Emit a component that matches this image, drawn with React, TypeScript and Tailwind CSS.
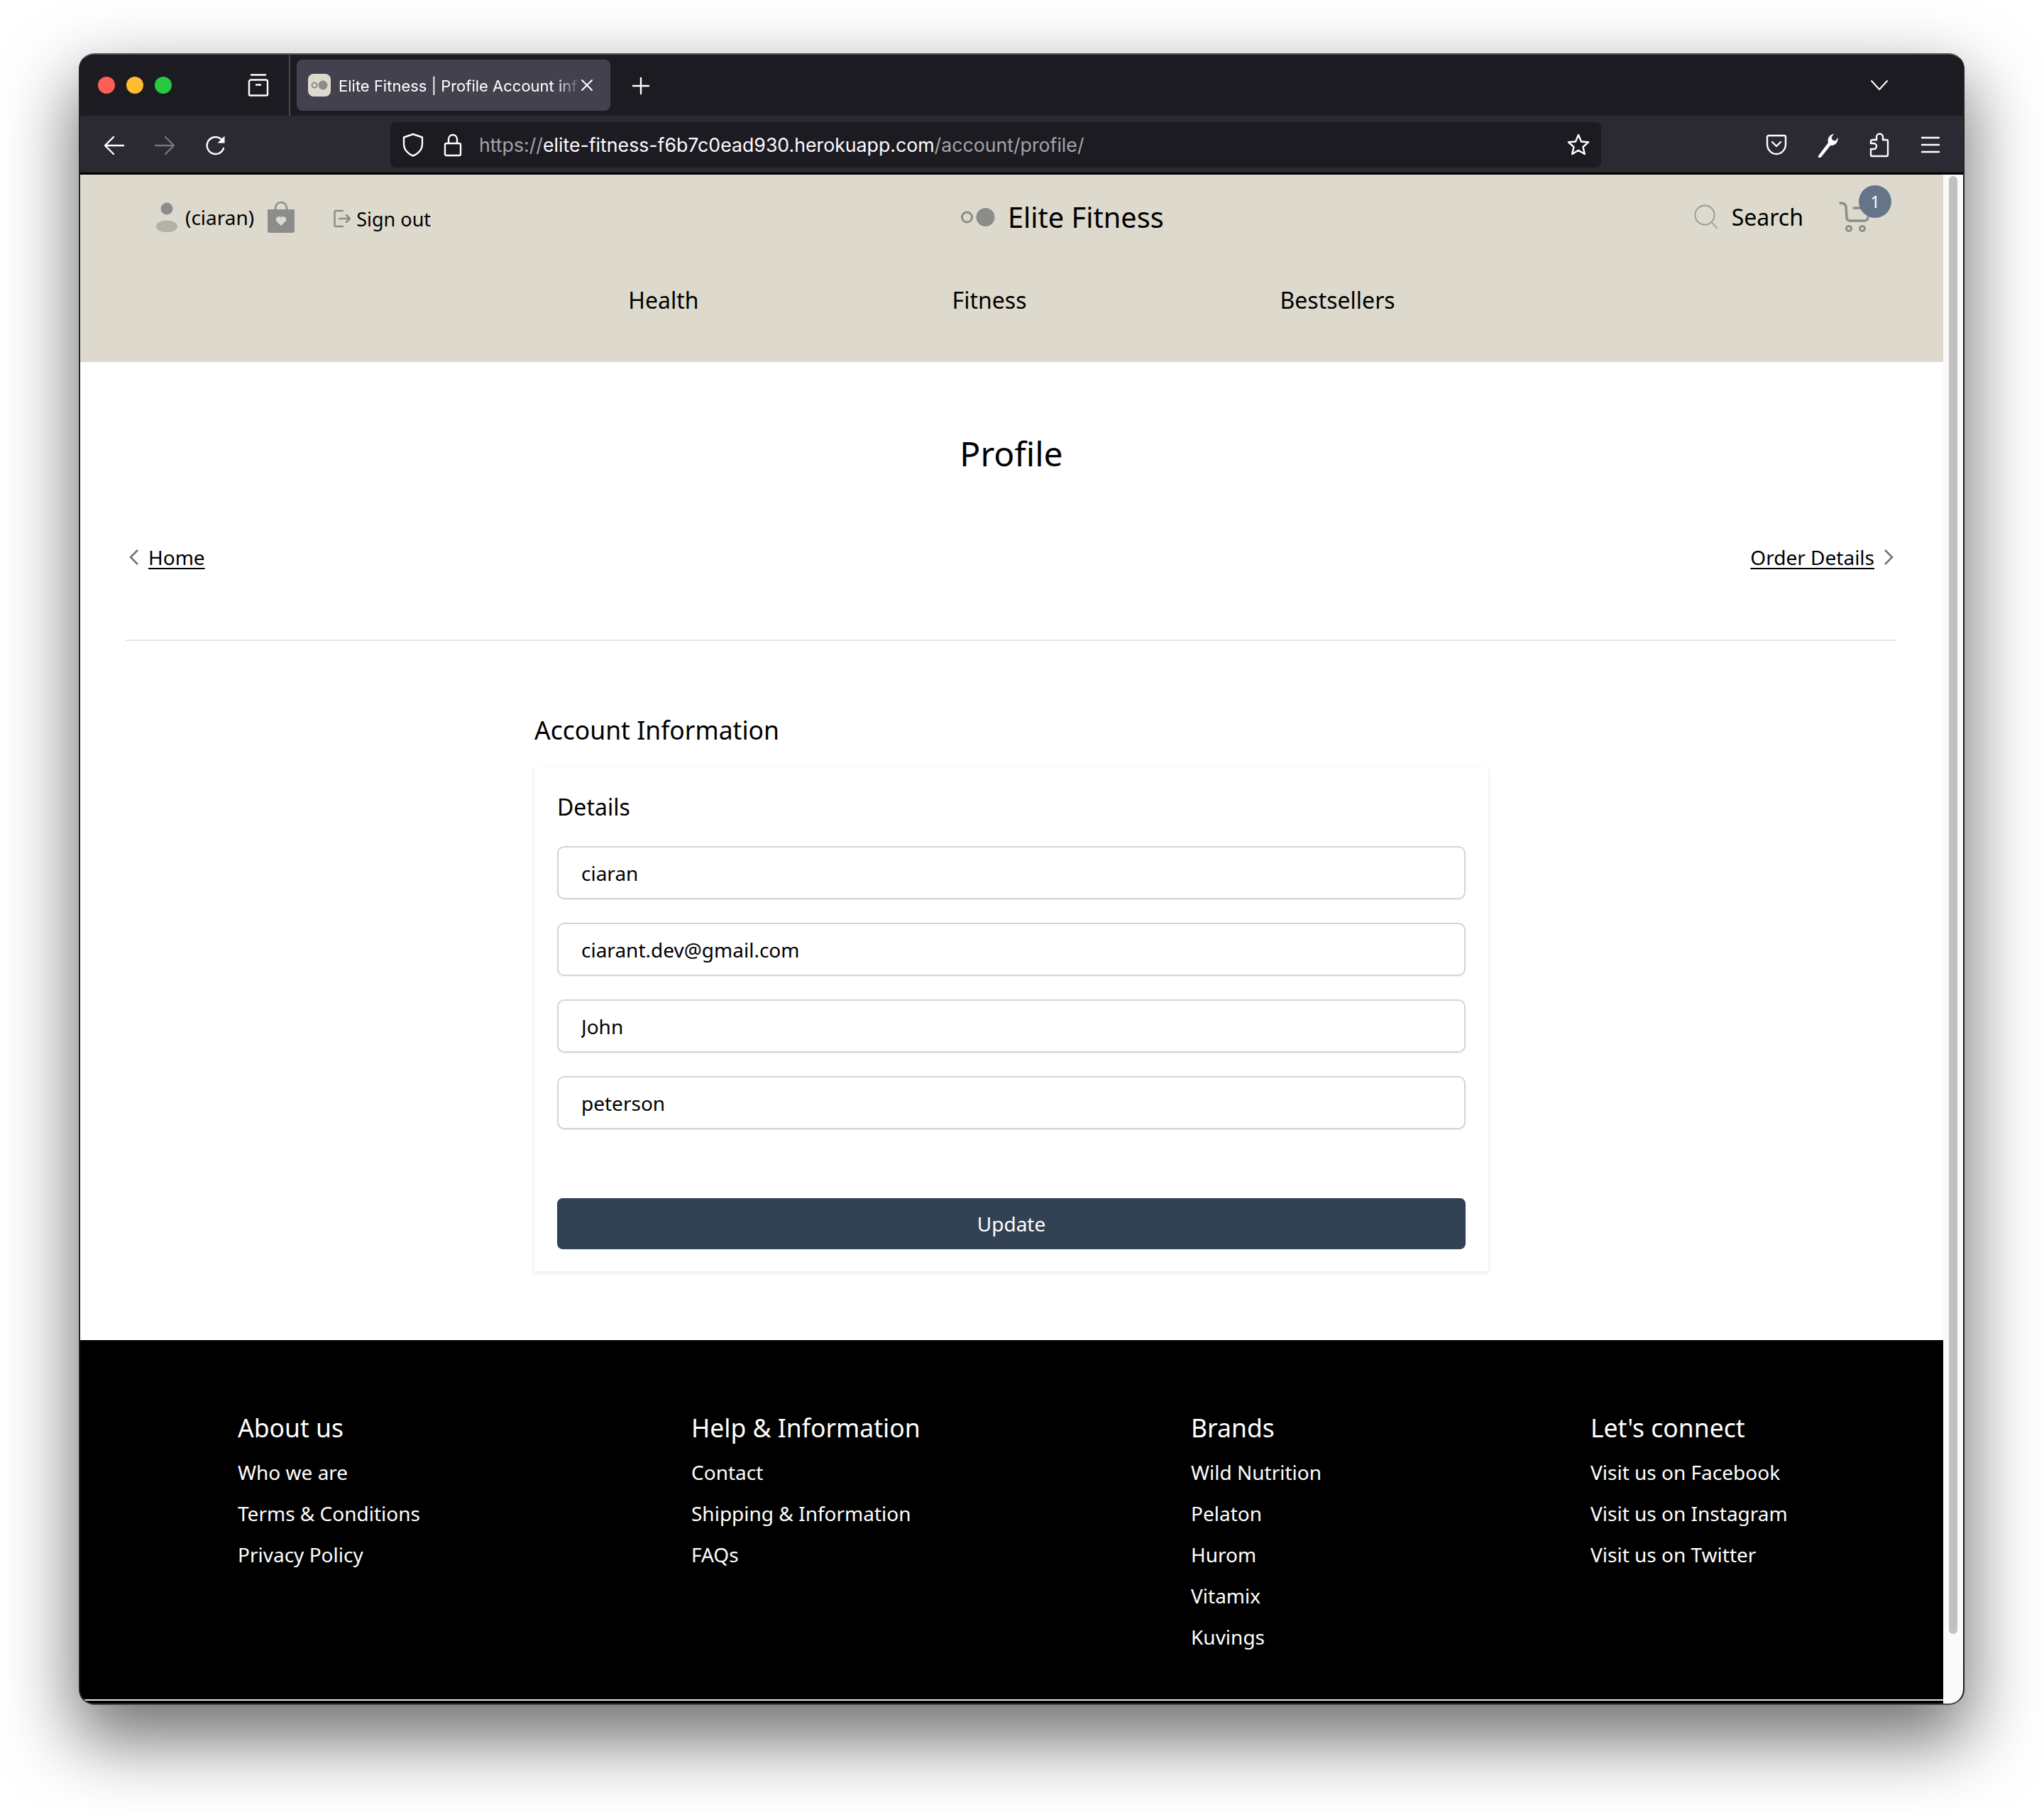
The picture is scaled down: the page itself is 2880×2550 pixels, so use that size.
import React from 'react'

const sans = "font-['Noto_Sans','Open_Sans',sans-serif]"

const footerCols = [
  { title: 'About us', width: 'w-[639px]', links: ['Who we are', 'Terms & Conditions', 'Privacy Policy'] },
  { title: 'Help & Information', width: 'w-[704px]', links: ['Contact', 'Shipping & Information', 'FAQs'] },
  { title: 'Brands', width: 'w-[563px]', links: ['Wild Nutrition', 'Pelaton', 'Hurom', 'Vitamix', 'Kuvings'] },
  { title: "Let's connect", width: 'w-[400px]', links: ['Visit us on Facebook', 'Visit us on Instagram', 'Visit us on Twitter'] },
]

const fields = ['ciaran', 'ciarant.dev@gmail.com', 'John', 'peterson']

function Logo({ small }: { small?: boolean }) {
  return small ? (
    <svg width="32" height="32" viewBox="0 0 32 32" className="shrink-0">
      <rect width="32" height="32" rx="8" fill="#dddacd" />
      <circle cx="9" cy="16" r="3.5" fill="none" stroke="#8c8c8c" strokeWidth="2" />
      <circle cx="21" cy="16" r="6.5" fill="#8c8c8c" />
    </svg>
  ) : (
    <svg width="48" height="26" viewBox="0 0 48 26" className="shrink-0">
      <circle cx="8.5" cy="13" r="7" fill="none" stroke="#8c8c8c" strokeWidth="3" />
      <circle cx="34.5" cy="13" r="13" fill="#8c8c8c" />
    </svg>
  )
}

function ChromeIcon({ children, w = 32, h = 32, className = '' }: { children: React.ReactNode; w?: number; h?: number; className?: string }) {
  return (
    <svg width={w} height={h} viewBox={`0 0 ${w} ${h}`} fill="none" stroke="currentColor" strokeWidth="2.4" strokeLinecap="round" strokeLinejoin="round" className={`shrink-0 ${className}`}>
      {children}
    </svg>
  )
}

function TabBar() {
  return (
    <div className="flex h-[86px] shrink-0 items-center bg-[#1c1b22] text-white">
      <div className="ml-[25px] flex gap-4">
        <span className="h-6 w-6 rounded-full bg-[#ff5f57]" />
        <span className="h-6 w-6 rounded-full bg-[#febc2e]" />
        <span className="h-6 w-6 rounded-full bg-[#28c840]" />
      </div>
      <ChromeIcon className="ml-[106px]">
        <path d="M6 1.5h20M3 11a2.5 2.5 0 0 1 2.5-2.5h21A2.5 2.5 0 0 1 29 11v18a1.5 1.500 0 0 1-1.500 1.500h-23A1.500 1.500 0 0 1 3 29zM13 15.500h6" />
      </ChromeIcon>
      <div className="ml-[27px] h-full w-[2px] bg-[#4a4a50]" />
      <div className="ml-[9px] flex h-[72px] w-[442px] items-center rounded-lg bg-[#42414d] pl-4 font-['Inter',sans-serif] text-[22px]">
        <Logo small />
        <span className="ml-[11px] mt-[2px] w-[341px] shrink-0 overflow-hidden whitespace-nowrap [mask-image:linear-gradient(to_right,black_90%,transparent)]">
          Elite Fitness | Profile Account inf
        </span>
        <ChromeIcon w={18} h={18}>
          <path d="M2 2l14 14M16 2L2 16" strokeWidth="2" />
        </ChromeIcon>
      </div>
      <ChromeIcon w={26} h={26} className="ml-[30px] mt-[2px]">
        <path d="M13 2v22M2 13h22" />
      </ChromeIcon>
      <ChromeIcon w={26} h={16} className="ml-auto mr-[105px]">
        <path d="M2 2l11 12L24 2" strokeWidth="2" />
      </ChromeIcon>
    </div>
  )
}

function Toolbar() {
  return (
    <div className="box-content flex h-[79px] shrink-0 items-center border-b-[3px] border-black bg-[#2b2a33] pt-[1px] text-white">
      <ChromeIcon w={30} h={28} className="ml-[33px] mt-[2px]">
        <path d="M28 14H3M14 2L2 14l12 12" />
      </ChromeIcon>
      <ChromeIcon w={30} h={28} className="ml-[41px] mt-[2px] text-[#77767d]">
        <path d="M2 14h25M16 2l12 12-12 12" />
      </ChromeIcon>
      <ChromeIcon w={30} h={30} className="ml-[42px] mt-[2px]">
        <path d="M26 19a12 12 0 1 1-4-13.500L26 9" />
        <path d="M27.500 1.500v10h-10z" fill="currentColor" stroke="none" />
      </ChromeIcon>
      <div className="ml-[231px] flex h-16 w-[1706px] items-center rounded-lg bg-[#1c1b22] pl-4">
        <ChromeIcon w={32} h={34}>
          <path d="M16 2l13 4.500v9C29 24 23 30 16 32.500 9 30 3 24 3 15.500v-9z" />
        </ChromeIcon>
        <ChromeIcon w={28} h={34} className="ml-[26px]">
          <path d="M8 15V9a6 6 0 0 1 12 0v6M5 15h18a2 2 0 0 1 2 2v13a2 2 0 0 1-2 2H5a2 2 0 0 1-2-2V17a2 2 0 0 1 2-2z" />
        </ChromeIcon>
        <span className="ml-[23px] mt-[2px] whitespace-nowrap font-['Inter',sans-serif] text-[26.7px] text-[#a3a3a8]">
          https://<span className="text-[#fbfbfe]">elite-fitness-f6b7c0ead930.herokuapp.com</span>/account/profile/
        </span>
        <ChromeIcon w={34} h={34} className="ml-auto mr-[15px]">
          <path d="M17 3l4 9.500 10 .8-7.500 6.700 2.300 10L17 24.700 8.200 30l2.300-10L3 13.300l10-.8z" />
        </ChromeIcon>
      </div>
      <ChromeIcon w={30} h={32} className="ml-[232px]">
        <path d="M4 3h22a2 2 0 0 1 2 2v10c0 8-6 14-13 14S2 23 2 15V5a2 2 0 0 1 2-2zM9 12l6 6 6-6" />
      </ChromeIcon>
      <svg width="30" height="36" viewBox="0 0 30 36" className="ml-[42px] shrink-0" fill="#fff">
        <path d="M2 33.500L16 15c-1.500-5 1-11 8-12.500l-3.500 5 1.500 4 4 1 3.500-4.500c1 6-4 12-10.500 11L5.500 36c-2 1-4.500-.5-3.500-2.500z" />
      </svg>
      <ChromeIcon w={30} h={36} className="ml-[43px]">
        <path d="M3 16h4a4 4 0 0 1 0 8H3v8a2 2 0 0 0 2 2h20a2 2 0 0 0 2-2V13a2 2 0 0 0-2-2h-5V7a4.500 4.500 0 0 0-9 0v4H5a2 2 0 0 0-2 2z" />
      </ChromeIcon>
      <ChromeIcon w={28} h={28} className="ml-[43px]">
        <path d="M2 4h24M2 14h24M2 24h24" />
      </ChromeIcon>
    </div>
  )
}

function SiteHeader() {
  return (
    <header className="h-[264px] shrink-0 bg-[#dddacd] text-black">
      <div className="relative flex h-[120px] items-center pl-[107px]">
        <svg width="30" height="42" viewBox="0 0 30 42" className="shrink-0">
          <circle cx="15" cy="9" r="8.500" fill="#8c8c8c" />
          <ellipse cx="15" cy="34" rx="15" ry="8.500" fill="#b3b1a8" />
        </svg>
        <span className="ml-[11px] text-[28px] leading-none">(ciaran)</span>
        <svg width="38" height="44" viewBox="0 0 38 44" className="ml-[19px] shrink-0">
          <path d="M11 12V9a8 8 0 0 1 16 0v3" fill="none" stroke="#8c8c8c" strokeWidth="2.500" />
          <path d="M0 11h38v30a3 3 0 0 1-3 3H3a3 3 0 0 1-3-3z" fill="#8c8c8c" />
          <path d="M19 34l-7-7a4.500 4.500 0 0 1 7-5 4.500 4.500 0 0 1 7 5z" fill="#dddacd" />
        </svg>
        <svg width="24" height="26" viewBox="0 0 24 26" className="ml-[55px] mt-1 shrink-0" fill="none" stroke="#8c8c8c" strokeWidth="2.500" strokeLinejoin="round" strokeLinecap="round">
          <path d="M13 2H3a1.500 1.500 0 0 0-1.500 1.500v19A1.500 1.500 0 0 0 3 24h10M8 13h14M18 8l5 5-5 5" />
        </svg>
        <span className="ml-[8px] mt-1 text-[27px] leading-none">Sign out</span>
        <div className="absolute left-[1241px] top-0 flex h-[120px] items-center">
          <Logo />
          <span className="ml-[18px] mt-[1px] text-[39.7px] leading-none">Elite Fitness</span>
        </div>
        <div className="ml-auto flex items-center pr-[103px]">
          <svg width="34" height="36" viewBox="0 0 34 36" className="shrink-0" fill="none" stroke="#9a9a92" strokeWidth="1.800" strokeLinecap="round">
            <circle cx="15" cy="15" r="13.500" />
            <path d="M24.500 25l8 8.500" />
          </svg>
          <span className="ml-[19px] text-[32px] leading-none">Search</span>
          <div className="relative ml-[50px] h-[44px] w-[44px]">
            <svg width="44" height="44" viewBox="0 0 44 44" fill="none" stroke="#8c8c8c" strokeWidth="3.500" strokeLinecap="round" strokeLinejoin="round">
              <path d="M2 2c4 0 7 1 8 5l1 16c.5 3 2 4 5 4h20c3 0 5-2 5-5M21 9h14" />
              <circle cx="14" cy="38" r="3.500" strokeWidth="3" />
              <circle cx="33" cy="38" r="3.500" strokeWidth="3" />
            </svg>
            <span className="absolute -right-[30px] -top-[23px] flex h-[46px] w-[46px] items-center justify-center rounded-full bg-[#64748b] text-[24px] leading-none text-white">1</span>
          </div>
        </div>
      </div>
      <nav className="mt-[41px] flex justify-center gap-[357px] text-[32px] leading-none">
        <a>Health</a>
        <a>Fitness</a>
        <a>Bestsellers</a>
      </nav>
    </header>
  )
}

function ProfileMain() {
  return (
    <main className="flex-1 bg-white pl-[64px] pr-[65px] text-black">
      <h1 className="pt-[96px] text-center text-[48px] leading-[66px]">Profile</h1>
      <div className="mt-[95px] flex items-center justify-between text-[28px] leading-[36px]">
        <div className="flex items-center">
          <svg width="14" height="24" viewBox="0 0 14 24" className="ml-[5px]" fill="none" stroke="#6b7280" strokeWidth="2.500">
            <path d="M12 2L2 12l10 10" />
          </svg>
          <a className="ml-[13px] underline decoration-2 underline-offset-[4px]">Home</a>
        </div>
        <div className="flex items-center">
          <a className="underline decoration-2 underline-offset-[4px]">Order Details</a>
          <svg width="14" height="24" viewBox="0 0 14 24" className="ml-[13px] mr-[5px]" fill="none" stroke="#6b7280" strokeWidth="2.500">
            <path d="M2 2l10 10L2 22" />
          </svg>
        </div>
      </div>
      <div className="mt-[98px] h-[2px] bg-[#e5e7eb]" />
      <section className="mx-auto mt-[98px] w-[1344px]">
        <h2 className="text-[35.5px] leading-[54px]">Account Information</h2>
        <div className="mt-[25px] h-[711px] bg-white px-8 pt-[32px] shadow-[0_2px_6px_rgba(0,0,0,0.1)]">
          <h3 className="text-[32px] leading-[50px]">Details</h3>
          <div className="mt-[30px] flex flex-col gap-[33px]">
            {fields.map((f) => (
              <input key={f} readOnly defaultValue={f} className="h-[75px] w-full rounded-[10px] border-2 border-[#d1d5db] bg-white px-8 text-[28px] text-black shadow-[0_1px_2px_rgba(0,0,0,0.06)] outline-none" />
            ))}
          </div>
          <button className="mt-[97px] h-[72px] w-full rounded-lg bg-[#334155] text-[28px] text-white">Update</button>
        </div>
      </section>
    </main>
  )
}

function SiteFooter() {
  return (
    <footer className="h-[506px] shrink-0 bg-black pl-[222px] pt-[96px] text-white">
      <div className="flex">
        {footerCols.map((col) => (
          <div key={col.title} className={col.width}>
            <h4 className="text-[35.5px] leading-[54px]">{col.title}</h4>
            <ul className="mt-[7px] text-[28px] leading-[58px]">
              {col.links.map((l) => (
                <li key={l}>{l}</li>
              ))}
            </ul>
          </div>
        ))}
      </div>
    </footer>
  )
}

export default function App() {
  return (
    <div className={`h-[2550px] w-[2880px] overflow-hidden bg-white pl-[111px] pt-[75px] ${sans}`}>
      <div className="flex h-[2327px] w-[2657px] flex-col overflow-hidden rounded-[22px] border-2 border-x-[#222] border-t-[#555] border-b-[#444] bg-black shadow-[0_44px_100px_6px_rgba(0,0,0,0.56)]">
        <TabBar />
        <Toolbar />
        <div className="flex h-[2154px]">
          <div className="flex w-[2625px] flex-col">
            <SiteHeader />
            <ProfileMain />
            <SiteFooter />
            <div className="h-[2px] shrink-0 bg-[#e8e8ea]" />
            <div className="h-1 shrink-0 bg-black" />
          </div>
          <div className="flex-1 bg-[#fafafa] px-2 pt-[2px]">
            <div className="h-[2054px] rounded-full bg-[#c1c1c1]" />
          </div>
        </div>
      </div>
    </div>
  )
}
